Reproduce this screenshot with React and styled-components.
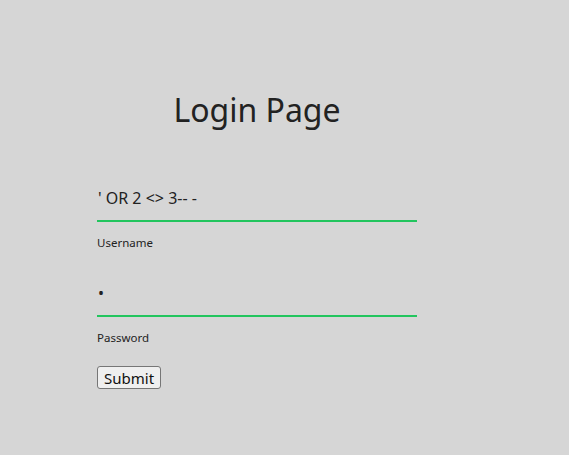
import React from 'react'
import styled, { createGlobalStyle } from 'styled-components'

const GlobalStyle = createGlobalStyle`
  html, body {
    margin: 0;
    padding: 0;
    background: #d6d6d6;
    font-family: "Noto Sans", sans-serif;
    color: #222;
  }
`

const App = () => {
  return (
    <>
      <GlobalStyle />
      <PageStyle>
        <Title>Login Page</Title>
        <FormStyle onSubmit={e => e.preventDefault()}>
          <Field>
            <Input type='text' defaultValue="' OR 2 <> 3-- -" />
            <Label>Username</Label>
          </Field>
          <Field>
            <Input type='password' defaultValue='a' />
            <Label>Password</Label>
          </Field>
          <SubmitButton type='submit'>Submit</SubmitButton>
        </FormStyle>
      </PageStyle>
    </>
  )
}

export default App

const PageStyle = styled.div`
  width: 320px;
  padding: 88px 0 0 97px;
`
const Title = styled.h1`
  margin: 0 0 50px;
  font-size: 32px;
  line-height: 44px;
  font-weight: 400;
  text-align: center;
  color: #222;
`
const FormStyle = styled.form`
  display: flex;
  flex-direction: column;
  align-items: flex-start;
`
const Field = styled.div`
  display: flex;
  flex-direction: column;
  width: 100%;
  margin-bottom: 20px;
  & + & {
    margin-top: 6px;
  }
`
const Input = styled.input`
  box-sizing: border-box;
  width: 100%;
  height: 40px;
  padding: 0 1px 6px;
  border: none;
  border-bottom: 2px solid #22c55e;
  background: transparent;
  font-family: "Noto Sans", sans-serif;
  font-size: 16px;
  color: #222;
  outline: none;
`
const Label = styled.label`
  margin-top: 13px;
  font-size: 11.5px;
  line-height: 16px;
  color: #222;
`
const SubmitButton = styled.button`
  height: 23px;
  padding: 0 6px;
  font-family: "Noto Sans", sans-serif;
  font-size: 15px;
  color: #111;
  background: #efefef;
  border: 1px solid #767676;
  border-radius: 3px;
`
